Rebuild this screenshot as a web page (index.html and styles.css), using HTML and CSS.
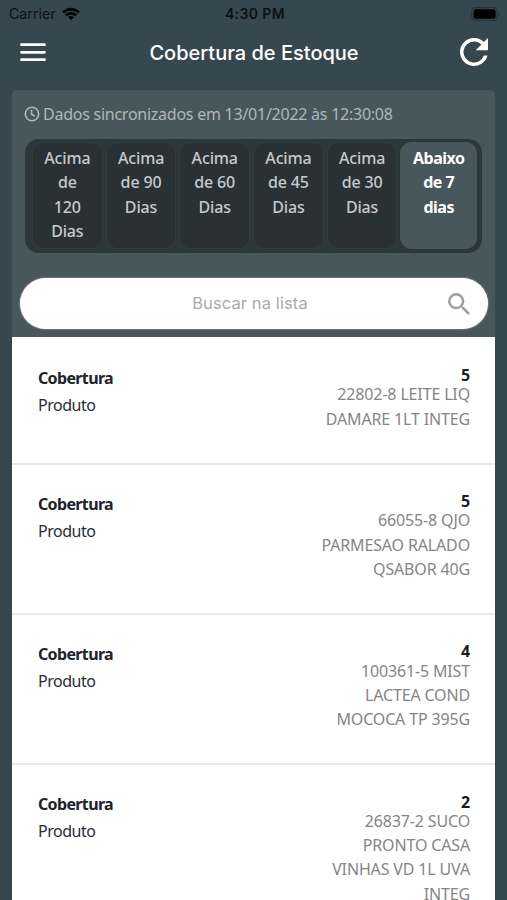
FILE: index.html
```html
<!DOCTYPE html>
<html lang="pt-BR">

<head>
    <meta charset="UTF-8">
    <meta name="viewport" content="width=device-width, initial-scale=1.0">
    <title>Cobertura de Estoque</title>
    <link rel="stylesheet" href="styles.css">
</head>

<body>
    <div class="status-bar">
        <div class="carrier">
            <span class="carrier-name">Carrier</span>
            <svg width="18" height="14" viewBox="0 0 18 14">
                <path d="M0.2 4.6C5.2 -0.6 12.8 -0.6 17.8 4.6L15.9 6.4C12 2.7 6 2.7 2.1 6.4Z" />
                <path d="M3.1 7.5C6.4 4.3 11.6 4.3 14.9 7.5L13 9.3C10.8 7.2 7.2 7.2 5 9.3Z" />
                <path d="M6 10.2C7.7 8.7 10.3 8.7 12 10.2L9 13.3Z" />
            </svg>
        </div>
        <span class="time">4:30 PM</span>
        <svg class="battery" width="30" height="14" viewBox="0 0 30 14">
            <rect x="0.8" y="0.6" width="25.4" height="12.8" rx="3.8" fill="none" stroke="#26343a" stroke-width="1.2" />
            <rect x="2.6" y="2.2" width="22" height="9.6" rx="2" />
            <path d="M27.6 4.8Q29.3 5.6 29.3 7T27.6 9.2Z" fill="#26343a" />
        </svg>
    </div>

    <header class="header">
        <button class="icon-button" aria-label="Menu">
            <svg width="26" height="20" viewBox="0 0 26 20">
                <path d="M1.5 2.7H24.5M1.5 10.3H24.5M1.5 17.7H24.5" stroke="#fff" stroke-width="2.8" stroke-linecap="round" />
            </svg>
        </button>
        <h1 class="title">Cobertura de Estoque</h1>
        <button class="icon-button" aria-label="Atualizar">
            <svg width="28" height="28" viewBox="4 4 16 16" fill="#fff">
                <path d="M17.65 6.35A7.96 7.96 0 0 0 12 4a8 8 0 1 0 7.73 10h-2.08A6 6 0 1 1 12 6c1.66 0 3.14.69 4.22 1.78L13 11h7V4z" />
            </svg>
        </button>
    </header>

    <main class="panel">
        <p class="sync">
            <svg width="16" height="16" viewBox="0 0 16 16" fill="none" stroke="#aeb7ba" stroke-width="1.6">
                <circle cx="8" cy="8" r="6.7" />
                <path d="M7.6 3.8V8.3L10.9 10.2" />
            </svg>
            <span class="sync-text">Dados sincronizados em 13/01/2022 às 12:30:08</span>
        </p>

        <div class="tabs">
            <button class="tab">Acima<br>de<br>120<br>Dias</button>
            <button class="tab">Acima<br>de 90<br>Dias</button>
            <button class="tab">Acima<br>de 60<br>Dias</button>
            <button class="tab">Acima<br>de 45<br>Dias</button>
            <button class="tab">Acima<br>de 30<br>Dias</button>
            <button class="tab active">Abaixo<br>de 7<br>dias</button>
        </div>

        <label class="search">
            <input class="search-input" type="text" placeholder="Buscar na lista">
            <svg width="22" height="22" viewBox="3 3 17.5 17.5" fill="#a0a0a0">
                <path d="M15.5 14h-.79l-.28-.27A6.47 6.47 0 0 0 16 9.5 6.5 6.5 0 1 0 9.5 16c1.61 0 3.09-.59 4.23-1.57l.27.28v.79l5 4.99L20.49 19l-4.99-5zm-6 0a4.5 4.5 0 1 1 0-9 4.5 4.5 0 0 1 0 9z" />
            </svg>
        </label>

        <ul class="list">
            <li class="row">
                <div class="labels"><strong>Cobertura</strong><span>Produto</span></div>
                <div class="values"><strong>5</strong><span>22802-8 LEITE LIQ<br>DAMARE 1LT INTEG</span></div>
            </li>
            <li class="row">
                <div class="labels"><strong>Cobertura</strong><span>Produto</span></div>
                <div class="values"><strong>5</strong><span>66055-8 QJO<br>PARMESAO RALADO<br>QSABOR 40G</span></div>
            </li>
            <li class="row">
                <div class="labels"><strong>Cobertura</strong><span>Produto</span></div>
                <div class="values"><strong>4</strong><span>100361-5 MIST<br>LACTEA COND<br>MOCOCA TP 395G</span></div>
            </li>
            <li class="row">
                <div class="labels"><strong>Cobertura</strong><span>Produto</span></div>
                <div class="values"><strong>2</strong><span>26837-2 SUCO<br>PRONTO CASA<br>VINHAS VD 1L UVA<br>INTEG</span></div>
            </li>
        </ul>
    </main>
</body>

</html>
```
FILE: styles.css
```css
* {
    box-sizing: border-box;
}

body {
    margin: 0;
    height: 900px;
    overflow: hidden;
    background-color: #37474f;
    font-family: 'Noto Sans', 'Open Sans', sans-serif;
    font-size: 16px;
}

button {
    margin: 0;
    border: none;
    background: none;
    font: inherit;
}

.status-bar {
    display: grid;
    grid-template-columns: 1fr auto 1fr;
    align-items: center;
    height: 27px;
    padding: 0 6px 0 9px;
    font-family: Inter, sans-serif;
    font-size: 14px;
    color: #0b1114;
}

.carrier {
    display: flex;
    align-items: center;
    gap: 6px;
}

.carrier-name {
    letter-spacing: 0.1px;
}

.time {
    font-weight: 600;
    letter-spacing: 0.4px;
}

.battery {
    justify-self: end;
}

.header {
    display: flex;
    justify-content: space-between;
    align-items: center;
    height: 50px;
    padding: 0 19px 0 20px;
}

.icon-button {
    display: flex;
    padding: 0;
}

.title {
    margin: 0;
    padding: 1px 0 0 2px;
    font-family: Inter, sans-serif;
    font-size: 20px;
    font-weight: 500;
    color: #fff;
}

.panel {
    margin: 13px 12px 0;
    background-color: #48575c;
    border-radius: 5px 5px 0 0;
}

.sync {
    display: flex;
    align-items: center;
    gap: 3px;
    height: 49px;
    margin: 0;
    padding: 0 0 2px 12px;
    color: #aeb7ba;
    letter-spacing: -0.25px;
}

.tabs {
    display: flex;
    gap: 3px;
    height: 114px;
    margin: 0 13px;
    padding: 3px 5px 4px 7px;
    border-radius: 14px;
    background-color: #2b373b;
}

.tab {
    display: flex;
    justify-content: center;
    width: 70.7px;
    padding: 3px 0 0;
    border: 1px solid #303d41;
    border-radius: 11px;
    background-color: #2a3135;
    color: #c5c9cb;
    font-weight: 500;
    line-height: 24.4px;
    letter-spacing: -0.15px;
}

.tab.active {
    flex: 1;
    border-color: #48575c;
    background-color: #48575c;
    color: #fff;
    font-weight: 700;
    letter-spacing: -0.5px;
}

.search {
    display: flex;
    align-items: center;
    height: 51px;
    margin: 25px 7px 8px 8px;
    padding: 0 18px 0 32px;
    border-radius: 26px;
    background-color: #fff;
    box-shadow: 0 0 2px #c5c0c4;
}

.search-input {
    flex: 1;
    min-width: 0;
    padding: 0 0 2px;
    border: none;
    outline: none;
    background: none;
    font-family: Inter, sans-serif;
    font-size: 16.5px;
    letter-spacing: 0.1px;
    text-align: center;
}

.search-input::placeholder {
    color: #aaa;
}

.list {
    margin: 0;
    padding: 1.5px 0 0;
    list-style: none;
    background-color: #fff;
}

.row {
    display: flex;
    justify-content: space-between;
    padding: 26px 25px 31.8px 26px;
    border-bottom: 2px solid #e8e8ea;
}

.labels,
.values {
    display: flex;
    flex-direction: column;
}

.labels {
    line-height: 27px;
    letter-spacing: -0.5px;
    color: #292c35;
}

.labels strong {
    letter-spacing: -0.65px;
    color: #20232b;
}

.values {
    padding-top: 3.4px;
    text-align: right;
    line-height: 24.2px;
    letter-spacing: -0.15px;
    color: #858585;
}

.values strong {
    line-height: 14.5px;
    color: #1b1c22;
}
```
